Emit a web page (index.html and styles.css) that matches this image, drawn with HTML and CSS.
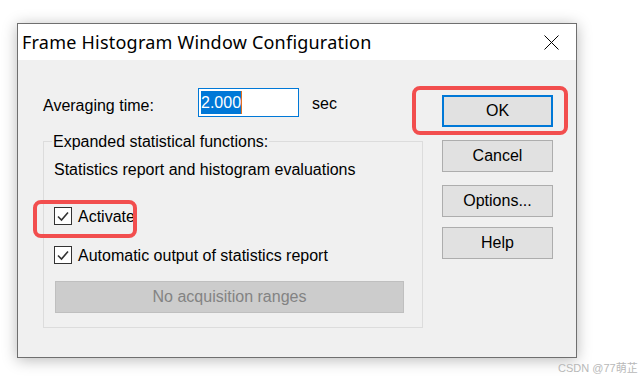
FILE: index.html
```html
<!DOCTYPE html>
<html>
<head>
<meta charset="utf-8">
<link rel="stylesheet" href="styles.css">
</head>
<body>
<div class="window">
  <div class="titlebar">
    <span class="title">Frame Histogram Window Configuration</span>
    <svg class="close" width="15" height="15" viewBox="0 0 15 15"><path d="M0.5 0.5 L14.5 14.5 M14.5 0.5 L0.5 14.5" stroke="#000" stroke-width="1" fill="none"/></svg>
  </div>
  <div class="content">
    <div class="leftcol">
      <div class="row-avg">
        <span class="avg-label">Averaging time:</span>
        <div class="input"><span class="sel">2.000</span></div>
        <span class="unit">sec</span>
      </div>
      <fieldset class="group">
        <legend class="legend">Expanded statistical functions:</legend>
        <div class="stats">Statistics report and histogram evaluations</div>
        <div class="check check-1">
          <span class="box"><svg width="16" height="16" viewBox="0 0 16 16"><path d="M3 8.5 L6.5 12 L13 4.5" stroke="#333" stroke-width="1.6" fill="none"/></svg></span>
          <span class="check-label">Activate</span>
        </div>
        <div class="check check-2">
          <span class="box"><svg width="16" height="16" viewBox="0 0 16 16"><path d="M3 8.5 L6.5 12 L13 4.5" stroke="#333" stroke-width="1.6" fill="none"/></svg></span>
          <span class="check-label">Automatic output of statistics report</span>
        </div>
        <div class="disabled-btn">No acquisition ranges</div>
      </fieldset>
    </div>
    <div class="buttons">
      <div class="btn btn-ok">OK</div>
      <div class="btn btn-cancel">Cancel</div>
      <div class="btn btn-options">Options...</div>
      <div class="btn btn-help">Help</div>
    </div>
  </div>
  <div class="mark mark-ok"></div>
  <div class="mark mark-activate"></div>
</div>
<div class="watermark">CSDN @77萌芷</div>
</body>
</html>
```
FILE: styles.css
```css
html, body {
  margin: 0;
  padding: 0;
  background: #ffffff;
}
body {
  width: 644px;
  height: 381px;
  position: relative;
  overflow: hidden;
  font-family: "Liberation Sans", Arial, sans-serif;
  font-size: 16px;
  color: #000;
}
.window {
  position: relative;
  margin: 23px 0 0 17px;
  width: 558px;
  height: 333px;
  border: 1px solid #6f6f6f;
  background: #f0f0f0;
  box-shadow: 0 2px 14px rgba(0, 0, 0, 0.28);
}
.titlebar {
  height: 36px;
  background: #ffffff;
  display: flex;
  align-items: center;
  justify-content: space-between;
  padding: 0 17px 0 4px;
}
.title {
  font-family: "Noto Sans", "Open Sans", sans-serif;
  font-size: 18px;
  letter-spacing: 0.22px;
  line-height: 20px;
  margin-top: -1px;
}
.close {
  display: block;
  margin-top: 1px;
}
.content {
  display: flex;
  padding-left: 25px;
}
.leftcol {
  width: 380px;
}
.row-avg {
  display: flex;
  align-items: center;
  margin-top: 28px;
  height: 29px;
}
.avg-label {
  width: 155px;
  line-height: 18px;
  margin-top: 7px;
}
.input {
  box-sizing: border-box;
  width: 101px;
  height: 29px;
  border: 1px solid #0078d7;
  background: #fff;
  padding: 2px 0 0 2px;
}
.sel {
  display: inline-block;
  background: #0078d7;
  color: #fff;
  line-height: 23px;
  height: 23px;
  border-right: 1px solid #e07020;
}
.unit {
  margin-left: 13px;
  line-height: 18px;
  margin-top: 2px;
}
.group {
  margin: 15px 0 0 0;
  padding: 11px 16px 14px 10px;
  border: 1px solid #dcdcdc;
  min-width: 0;
}
.legend {
  padding: 0 1px;
  margin-left: -2px;
  line-height: 18px;
  position: relative;
  top: 1px;
}
.stats {
  line-height: 18px;
}
.check {
  display: flex;
  align-items: center;
  height: 18px;
  line-height: 18px;
}
.check-1 { margin-top: 28px; }
.check-2 { margin-top: 21px; }
.box {
  box-sizing: border-box;
  width: 18px;
  height: 18px;
  border: 1px solid #333;
  background: #fff;
  display: flex;
  align-items: center;
  justify-content: center;
  margin-right: 6px;
}
.box svg { display: block; }
.check-label { margin-top: 1px; }
.disabled-btn {
  box-sizing: border-box;
  margin: 17px 0 0 1px;
  width: 349px;
  height: 32px;
  background: #cccccc;
  border: 1px solid #bfbfbf;
  color: #838383;
  display: flex;
  align-items: center;
  justify-content: center;
}
.buttons {
  margin-left: 19px;
  padding-top: 35px;
  display: flex;
  flex-direction: column;
}
.btn {
  box-sizing: border-box;
  width: 111px;
  height: 32px;
  background: #e1e1e1;
  border: 1px solid #adadad;
  display: flex;
  align-items: center;
  justify-content: center;
}
.btn-ok { border: 2px solid #0078d7; }
.btn-cancel { margin-top: 13px; }
.btn-options { margin-top: 13px; }
.btn-help { margin-top: 10px; }
.mark {
  position: absolute;
  box-sizing: border-box;
  border: 4px solid #f24e4e;
  border-radius: 8px;
}
.mark-ok {
  left: 394px;
  top: 62px;
  width: 156px;
  height: 49px;
}
.mark-activate {
  left: 15px;
  top: 176px;
  width: 104px;
  height: 38px;
}
.watermark {
  position: absolute;
  left: 558px;
  top: 362px;
  font-size: 11px;
  line-height: 13px;
  color: #b8b8b8;
  font-family: "Liberation Sans", "Noto Sans CJK SC", sans-serif;
}
```
